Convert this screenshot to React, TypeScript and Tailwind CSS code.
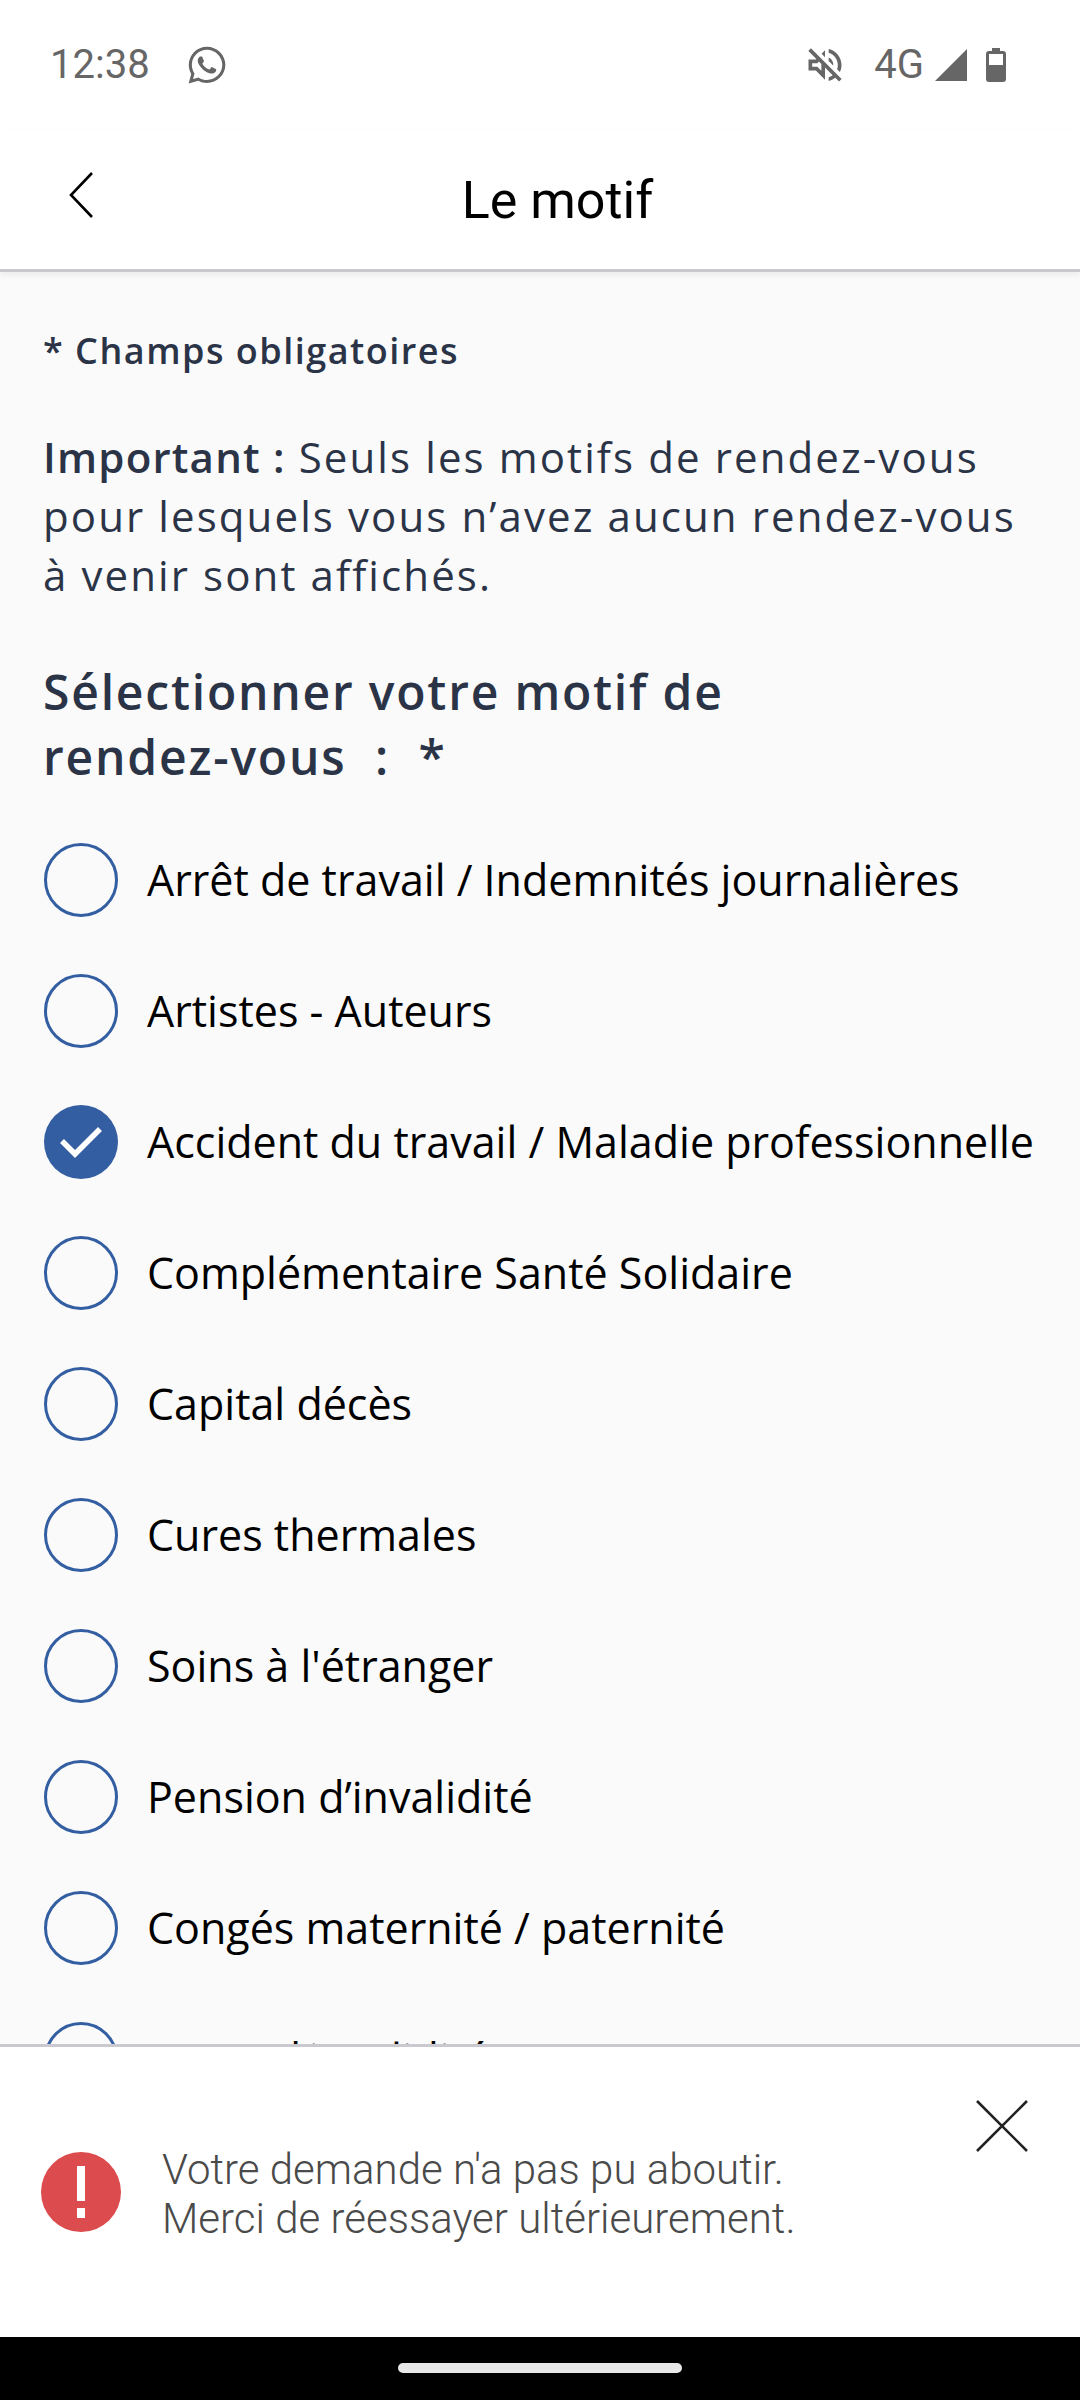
import { FaWhatsapp } from "react-icons/fa";
import { MdOutlineVolumeOff } from "react-icons/md";

const motifs = [
	"Arrêt de travail / Indemnités journalières",
	"Artistes - Auteurs",
	"Accident du travail / Maladie professionnelle",
	"Complémentaire Santé Solidaire",
	"Capital décès",
	"Cures thermales",
	"Soins à l'étranger",
	"Pension d’invalidité",
	"Congés maternité / paternité",
	"Rente d’invalidité",
];

function StatusBar() {
	return (
		<div className="flex h-[130px] shrink-0 items-start justify-between pl-[50px] pr-[74px] pt-[41px] font-['Roboto',sans-serif] text-[#666666]">
			<div className="flex items-center gap-[36px]">
				<span className="text-[40px] leading-[48px]">12:38</span>
				<FaWhatsapp className="h-[42px] w-[42px]" />
			</div>
			<div className="flex items-center">
				<MdOutlineVolumeOff className="h-[44px] w-[44px]" />
				<span className="ml-[27px] text-[40px] leading-[48px]">4G</span>
				<svg viewBox="0 0 32 32" className="ml-[11px] h-[32px] w-[32px]">
					<path d="M32 0V32H0Z" fill="#666666" />
				</svg>
				<svg viewBox="0 0 20 34" className="ml-[19px] h-[34px] w-[20px]">
					<path
						d="M6 0h8v3h3a3 3 0 0 1 3 3v25a3 3 0 0 1-3 3H3a3 3 0 0 1-3-3V6a3 3 0 0 1 3-3h3Z"
						fill="#666666"
					/>
					<rect x="3" y="6" width="14" height="11" fill="#ffffff" />
				</svg>
			</div>
		</div>
	);
}

function Header() {
	return (
		<div className="relative z-10 shrink-0 border-b-[3px] border-[#c9c9cf] bg-white shadow-[0_3px_6px_rgba(0,0,0,0.06)]">
			<div className="relative flex h-[139px] items-start justify-center pt-[2px]">
				<svg
					viewBox="0 0 24 46"
					className="absolute left-[69px] top-[42px] h-[46px] w-[24px]"
					fill="none"
					stroke="#000000"
					strokeWidth="2.6"
				>
					<path d="M23 1 2 23l21 22" />
				</svg>
				<h1 className="ml-[35px] mt-[39px] font-['Roboto',sans-serif] text-[52px] leading-[60px] text-black">
					Le motif
				</h1>
			</div>
		</div>
	);
}

function MotifRow({ label, checked }: { label: string; checked: boolean }) {
	return (
		<div className="flex h-[131px] shrink-0 items-center">
			{checked ? (
				<div className="flex h-[74px] w-[74px] shrink-0 items-center justify-center rounded-full bg-[#335ea1]">
					<svg viewBox="0 0 42 32" className="h-[32px] w-[42px]" fill="none" stroke="#ffffff" strokeWidth="5.5">
						<path d="M2 15 15 28 40 3" />
					</svg>
				</div>
			) : (
				<div className="h-[74px] w-[74px] shrink-0 rounded-full border-[3px] border-[#335ea1]" />
			)}
			<span className="ml-[29px] whitespace-nowrap text-[43px] leading-[56px] text-black">{label}</span>
		</div>
	);
}

function ErrorPanel() {
	return (
		<div className="relative z-10 h-[293px] shrink-0 border-t-[3px] border-[#c9c9cf] bg-white">
			<div className="flex items-center pl-[41px] pt-[94px]">
				<div className="flex h-[80px] w-[80px] shrink-0 flex-col items-center justify-center gap-[7px] rounded-full bg-[#dc4b4e]">
					<div className="h-[35px] w-[8px] bg-white" />
					<div className="h-[10px] w-[8px] bg-white" />
				</div>
				<p className="ml-[41px] mt-[4px] font-['Roboto',sans-serif] text-[42px] font-light leading-[49px] text-[#4a4a4a]">
					Votre demande n'a pas pu aboutir.
					<br />
					Merci de réessayer ultérieurement.
				</p>
			</div>
			<svg
				viewBox="0 0 52 52"
				className="absolute left-[976px] top-[53px] h-[52px] w-[52px]"
				fill="none"
				stroke="#222222"
				strokeWidth="2.6"
			>
				<path d="M1 1 51 51M51 1 1 51" />
			</svg>
		</div>
	);
}

export default function App() {
	return (
		<div className="flex h-[2400px] w-[1080px] flex-col overflow-hidden bg-white font-['Open_Sans',sans-serif]">
			<StatusBar />
			<Header />
			<main className="flex min-h-0 flex-1 flex-col overflow-hidden bg-[#fafafb] pl-[44px]">
				<p className="ml-[-1px] mt-[56px] text-[36px] font-semibold leading-[46px] tracking-[1.5px] text-[#2b3447]">
					* Champs obligatoires
				</p>
				<p className="ml-[-1px] mt-[53px] text-[42px] leading-[59px] tracking-[2.1px] text-[#2b3447]">
					<span className="font-semibold tracking-[1.2px]">Important :</span> Seuls les motifs de rendez-vous
					<br />
					pour lesquels vous n’avez aucun rendez-vous
					<br />à venir sont affichés.
				</p>
				<h2 className="ml-[-1px] mt-[55px] text-[48px] font-semibold leading-[65px] tracking-[1.8px] text-[#2b3447]">
					Sélectionner votre motif de
					<br />
					rendez-vous&nbsp; :&nbsp; *
				</h2>
				<div className="mt-[25px] flex flex-col">
					{motifs.map((label) => (
						<MotifRow key={label} label={label} checked={label.startsWith("Accident")} />
					))}
				</div>
			</main>
			<ErrorPanel />
			<div className="flex h-[63px] shrink-0 items-start justify-center bg-black pt-[26px]">
				<div className="h-[10px] w-[284px] rounded-full bg-[#e8e8e8]" />
			</div>
		</div>
	);
}
